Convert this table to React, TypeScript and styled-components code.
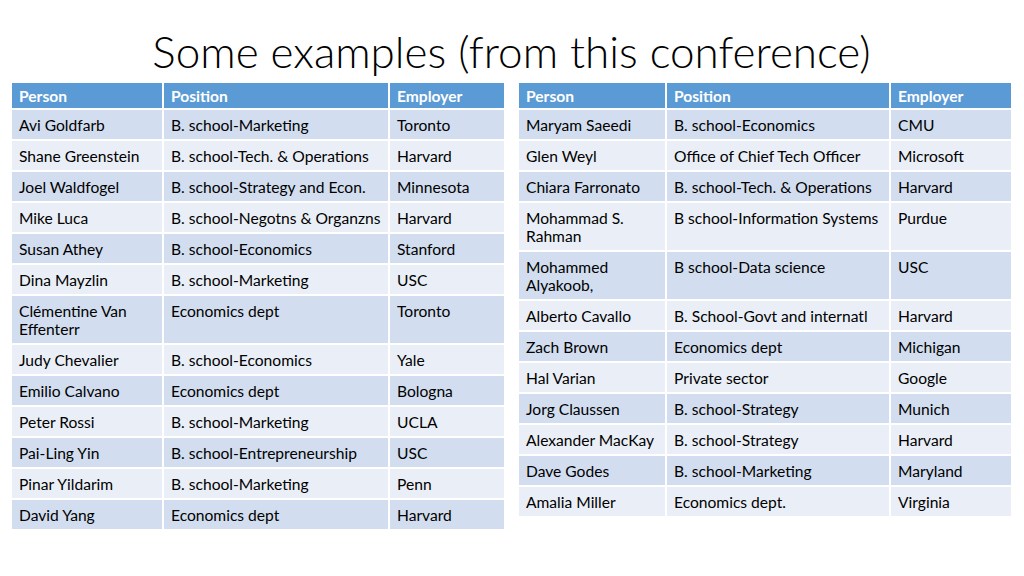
import React from "react";
import styled, { createGlobalStyle } from "styled-components";

type Row = [string, string, string];

const leftRows: Row[] = [
  ["Avi Goldfarb", "B. school-Marketing", "Toronto"],
  ["Shane Greenstein", "B. school-Tech. & Operations", "Harvard"],
  ["Joel Waldfogel", "B. school-Strategy and Econ.", "Minnesota"],
  ["Mike Luca", "B. school-Negotns & Organzns", "Harvard"],
  ["Susan Athey", "B. school-Economics", "Stanford"],
  ["Dina Mayzlin", "B. school-Marketing", "USC"],
  ["Clémentine Van Effenterr", "Economics dept", "Toronto"],
  ["Judy Chevalier", "B. school-Economics", "Yale"],
  ["Emilio Calvano", "Economics dept", "Bologna"],
  ["Peter Rossi", "B. school-Marketing", "UCLA"],
  ["Pai-Ling Yin", "B. school-Entrepreneurship", "USC"],
  ["Pinar Yildarim", "B. school-Marketing", "Penn"],
  ["David Yang", "Economics dept", "Harvard"],
];

const rightRows: Row[] = [
  ["Maryam Saeedi", "B. school-Economics", "CMU"],
  ["Glen Weyl", "Office of Chief Tech Officer", "Microsoft"],
  ["Chiara Farronato", "B. school-Tech. & Operations", "Harvard"],
  ["Mohammad S. Rahman", "B school-Information Systems", "Purdue"],
  ["Mohammed Alyakoob,", "B school-Data science", "USC"],
  ["Alberto Cavallo", "B. School-Govt and internatl", "Harvard"],
  ["Zach Brown", "Economics dept", "Michigan"],
  ["Hal Varian", "Private sector", "Google"],
  ["Jorg Claussen", "B. school-Strategy", "Munich"],
  ["Alexander MacKay", "B. school-Strategy", "Harvard"],
  ["Dave Godes", "B. school-Marketing", "Maryland"],
  ["Amalia Miller", "Economics dept.", "Virginia"],
];

const GlobalStyle = createGlobalStyle`
  html, body {
    margin: 0;
    padding: 0;
    background: #ffffff;
  }
  body {
    font-family: Lato, "Liberation Sans", sans-serif;
    color: #000;
  }
`;

const Slide = styled.div`
  width: 1024px;
  height: 576px;
  box-sizing: border-box;
  padding: 24px 11px 0 10px;
  display: flex;
  flex-direction: column;
  align-items: center;
`;

const Title = styled.h1`
  margin: 0 0 5px;
  font-family: Lato, "Liberation Sans", sans-serif;
  font-weight: 300;
  font-size: 44px;
  line-height: 54px;
  color: #000;
`;

const Tables = styled.div`
  display: flex;
  gap: 11px;
  align-items: flex-start;
  width: 100%;
`;

const Table = styled.table<{ $width: number }>`
  width: ${({ $width }) => $width}px;
  border-collapse: collapse;
  table-layout: fixed;
  font-size: 15.6px;
`;

const HeadCell = styled.th<{ $width: number }>`
  box-sizing: border-box;
  width: ${({ $width }) => $width}px;
  background: #5b9bd5;
  color: #ffffff;
  font-weight: 700;
  text-align: left;
  padding: 4px 7px 3px;
  line-height: 18px;
  border: 2px solid #ffffff;
  border-top: none;
`;

const BodyRow = styled.tr<{ $odd: boolean }>`
  background: ${({ $odd }) => ($odd ? "#d2deef" : "#eaeff7")};
`;

const Cell = styled.td`
  box-sizing: border-box;
  padding: 6px 7px 5px;
  line-height: 18px;
  vertical-align: top;
  border: 2px solid #ffffff;
  color: #000;
`;

const widthsLeft = [152, 226, 116];
const widthsRight = [148, 224, 122];

const PeopleTable: React.FC<{ rows: Row[]; widths: number[] }> = ({
  rows,
  widths,
}) => (
  <Table $width={widths.reduce((a, b) => a + b, 0)}>
    <thead>
      <tr>
        <HeadCell $width={widths[0]}>Person</HeadCell>
        <HeadCell $width={widths[1]}>Position</HeadCell>
        <HeadCell $width={widths[2]}>Employer</HeadCell>
      </tr>
    </thead>
    <tbody>
      {rows.map((r, i) => (
        <BodyRow key={r[0]} $odd={i % 2 === 0}>
          <Cell>{r[0]}</Cell>
          <Cell>{r[1]}</Cell>
          <Cell>{r[2]}</Cell>
        </BodyRow>
      ))}
    </tbody>
  </Table>
);

export default function App() {
  return (
    <>
      <GlobalStyle />
      <Slide>
        <Title>Some examples (from this conference)</Title>
        <Tables>
          <PeopleTable rows={leftRows} widths={widthsLeft} />
          <PeopleTable rows={rightRows} widths={widthsRight} />
        </Tables>
      </Slide>
    </>
  );
}
